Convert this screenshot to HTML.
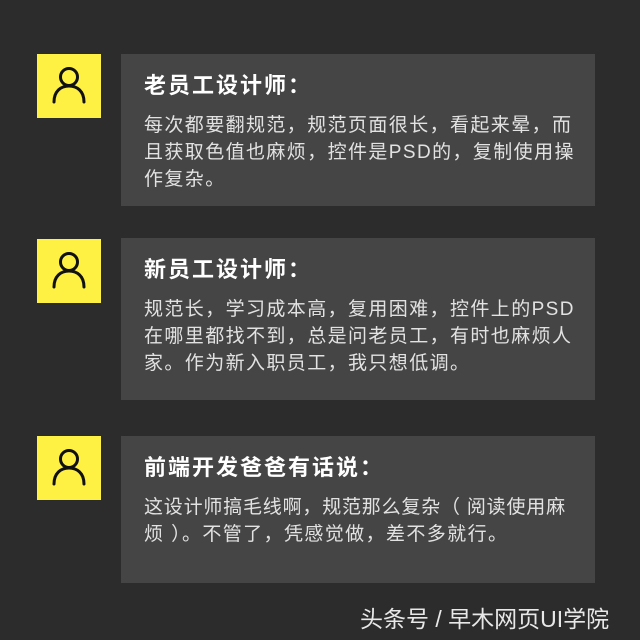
<html><head><style>
body{margin:0;width:640px;height:640px;background:#2c2c2c;position:relative;overflow:hidden;font-family:"Liberation Sans","Noto Sans CJK SC",sans-serif}
.y{position:absolute;left:37px;width:64px;height:64px;background:#fff143}
.y svg{position:absolute;left:14px;top:12px}
.c{position:absolute;left:121px;width:474px;background:#454545;box-sizing:border-box;padding:17px 20px 0 23px}
.t{color:#fff;font-weight:bold;font-size:22px;letter-spacing:2px;line-height:30px;height:41px}
.b{color:#e2e2e2;font-size:19px;letter-spacing:1.4px;line-height:27px}
.n{white-space:nowrap}
.f{position:absolute;left:360px;top:606px;color:#e8e8e8;font-size:23px;line-height:26px;white-space:nowrap}
</style></head><body>
<div class="y" style="top:54px"><svg width="36" height="40" viewBox="0 0 36 40"><circle cx="18" cy="11" r="8.5" fill="none" stroke="#111" stroke-width="3"/><path d="M3 36 C3 25 10 20 18 20 C26 20 33 25 33 36" fill="none" stroke="#111" stroke-width="3" stroke-linecap="round"/></svg></div>
<div class="c" style="top:54px;height:152px"><div class="t">老员工设计师：</div><div class="b">每次都要翻规范，规范页面很长，看起来晕，而且获取色值也麻烦，控件是PSD的，复制使用操作复杂。</div></div>
<div class="y" style="top:239px"><svg width="36" height="40" viewBox="0 0 36 40"><circle cx="18" cy="11" r="8.5" fill="none" stroke="#111" stroke-width="3"/><path d="M3 36 C3 25 10 20 18 20 C26 20 33 25 33 36" fill="none" stroke="#111" stroke-width="3" stroke-linecap="round"/></svg></div>
<div class="c" style="top:238px;height:162px"><div class="t">新员工设计师：</div><div class="b">规范长，学习成本高，复用困难，控件上的PSD在哪里都找不到，总是问老员工，有时也麻烦人家。作为新入职员工，我只想低调。</div></div>
<div class="y" style="top:436px"><svg width="36" height="40" viewBox="0 0 36 40"><circle cx="18" cy="11" r="8.5" fill="none" stroke="#111" stroke-width="3"/><path d="M3 36 C3 25 10 20 18 20 C26 20 33 25 33 36" fill="none" stroke="#111" stroke-width="3" stroke-linecap="round"/></svg></div>
<div class="c" style="top:436px;height:147px"><div class="t">前端开发爸爸有话说：</div><div class="b"><div class="n" style="letter-spacing:0.8px">这设计师搞毛线啊，规范那么复杂（ 阅读使用麻</div><div class="n">烦 ）。不管了，凭感觉做，差不多就行。</div></div></div>
<div class="f">头条号 / 早木网页UI学院</div>
</body></html>
